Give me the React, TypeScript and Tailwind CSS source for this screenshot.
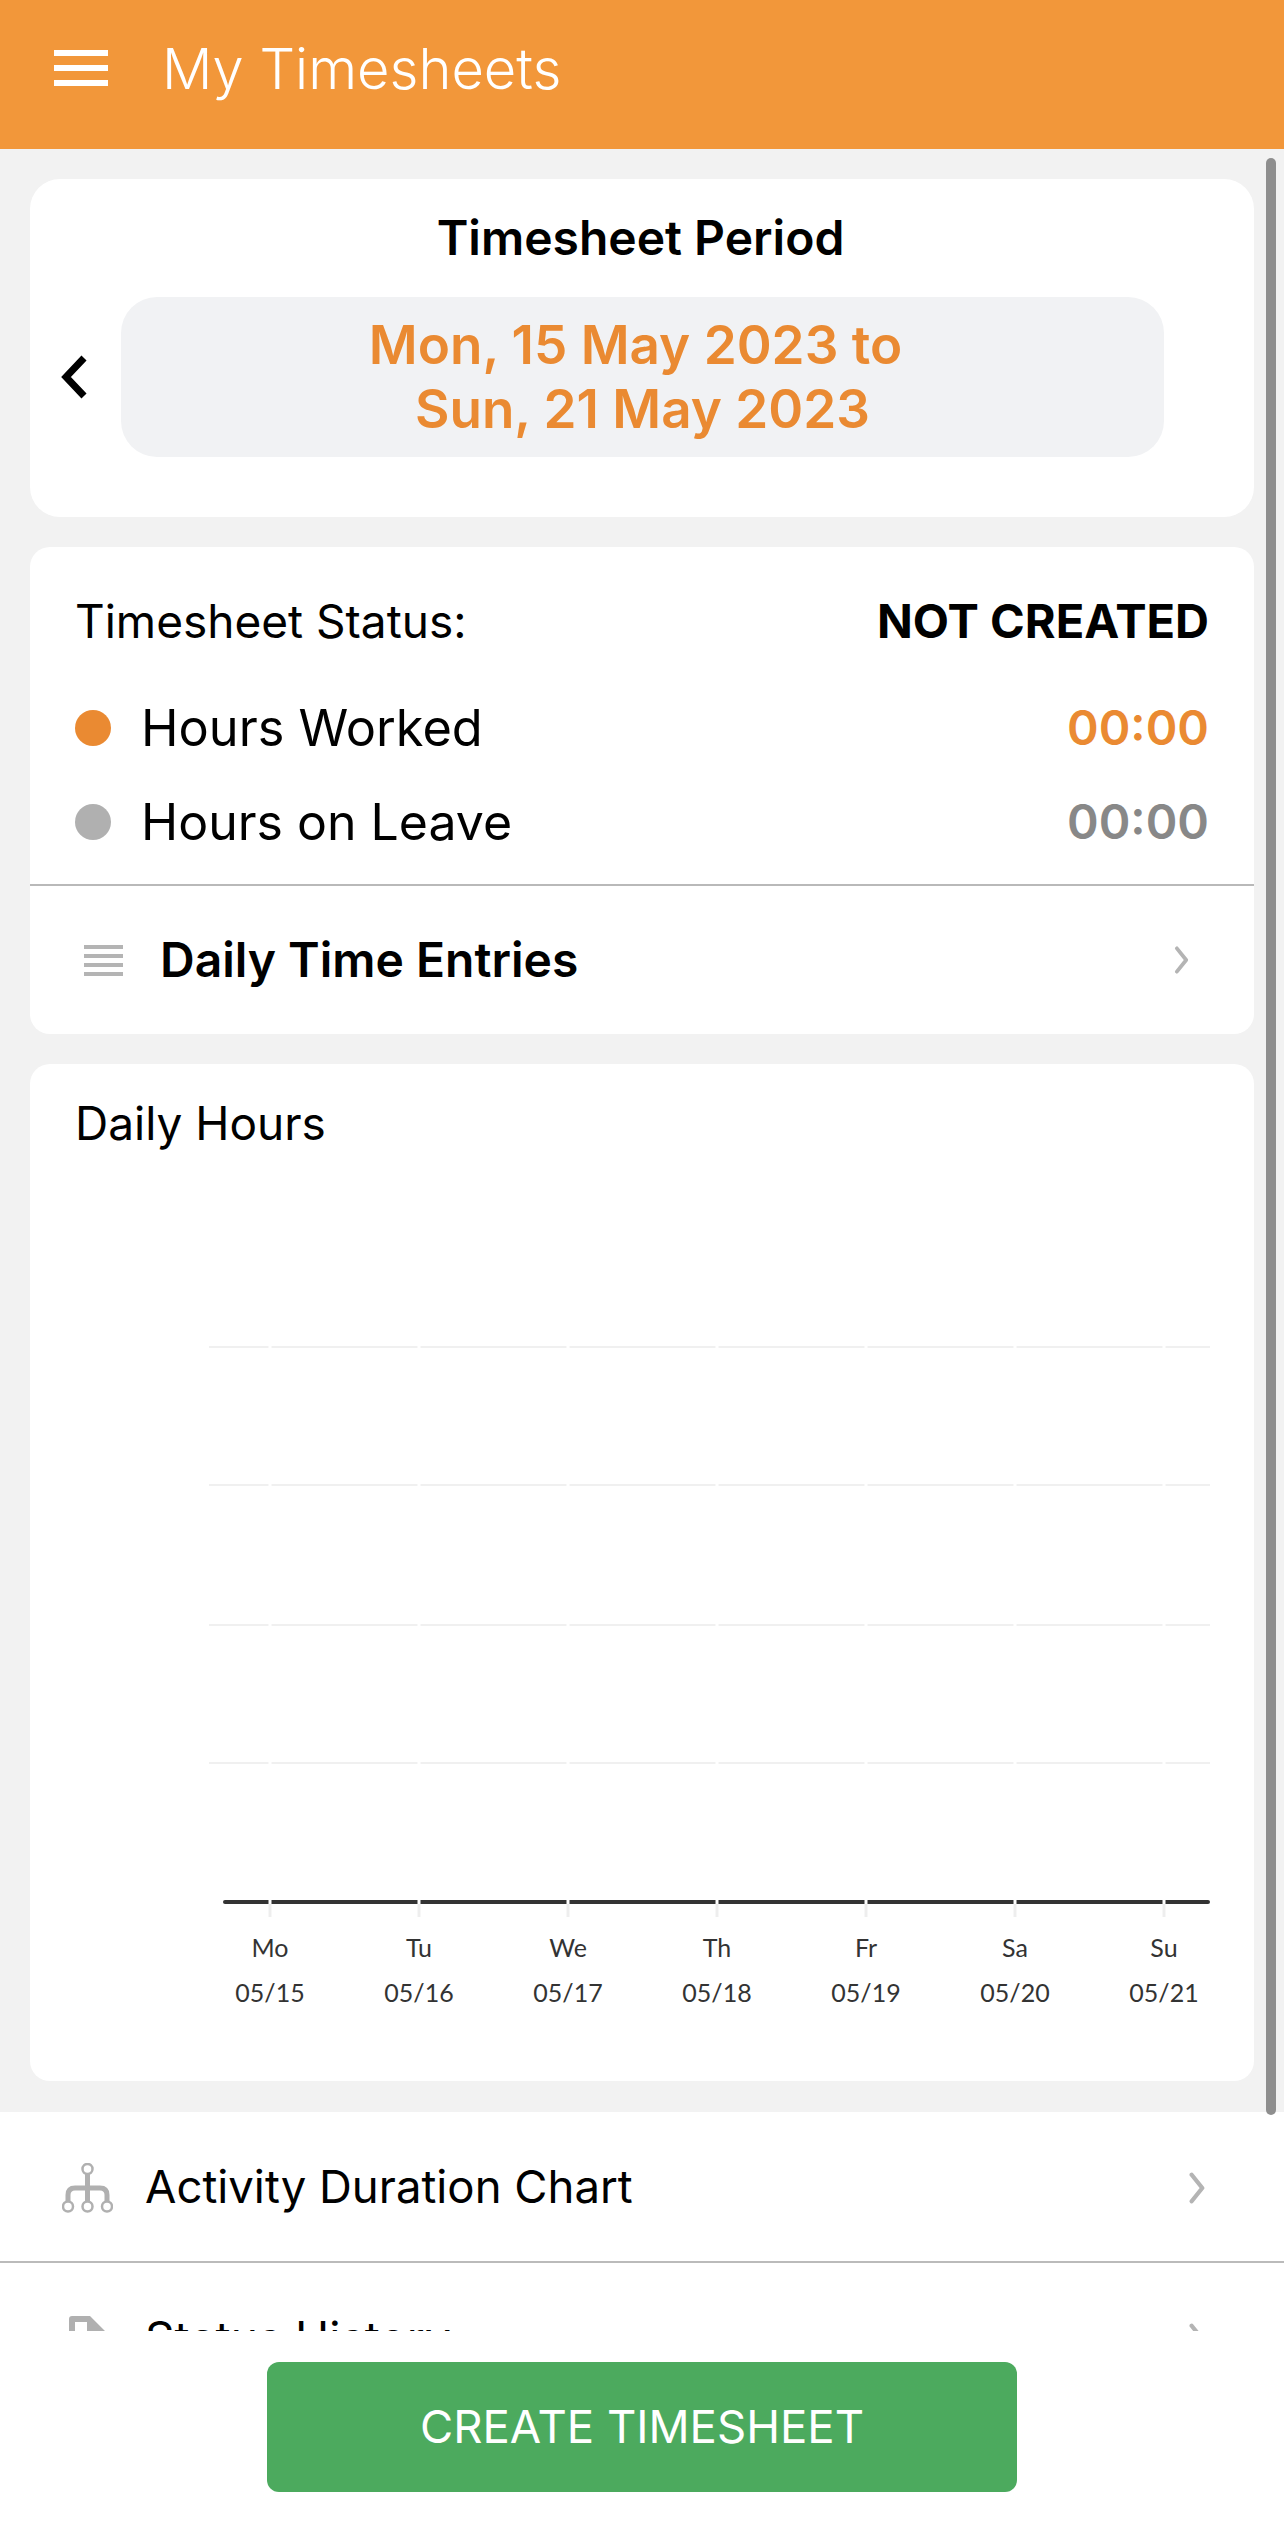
const days = [
  { day: 'Mo', date: '05/15' },
  { day: 'Tu', date: '05/16' },
  { day: 'We', date: '05/17' },
  { day: 'Th', date: '05/18' },
  { day: 'Fr', date: '05/19' },
  { day: 'Sa', date: '05/20' },
  { day: 'Su', date: '05/21' },
];

const tickX = days.map((_, i) => 240 + i * 149);

function Chevron({ className }: { className: string }) {
  return (
    <svg className={className} viewBox="0 0 16 30" fill="none" stroke="#b4b4b4" strokeWidth={4}>
      <path d="M2.5 2.5l10 12.5-10 12.5" strokeLinecap="round" strokeLinejoin="round" />
    </svg>
  );
}

// bar chart with no data: only the grid and the axis are drawn
function DailyChart() {
  return (
    <svg className="block w-full h-[760px]" viewBox="0 0 1224 760">
      {[67, 205, 345, 483].map((y) => (
        <line key={y} x1={179} x2={1180} y1={y} y2={y} stroke="#f0f0f0" strokeWidth={2} />
      ))}
      <line x1={195} x2={1178} y1={622} y2={622} stroke="#333333" strokeWidth={4} strokeLinecap="round" />
      {tickX.map((x) => (
        <g key={x}>
          <line x1={x} x2={x} y1={60} y2={624} stroke="#ffffff" strokeWidth={3} />
          <line x1={x} x2={x} y1={624} y2={637} stroke="#eeeeee" strokeWidth={3} />
        </g>
      ))}
      {days.map((d, i) => (
        <g key={d.day} fill="#333333" textAnchor="middle" fontSize={25} fontFamily="Lato, sans-serif">
          <text x={tickX[i]} y={677}>{d.day}</text>
          <text x={tickX[i]} y={722}>{d.date}</text>
        </g>
      ))}
    </svg>
  );
}

export default function App() {
  return (
    <div className="relative flex flex-col h-[2522px] w-[1284px] overflow-hidden bg-white text-black font-['Inter',sans-serif]">
      {/* Header */}
      <header className="flex items-center h-[149px] pl-[54px] flex-shrink-0 bg-[#f2973a] text-white">
        <div className="flex flex-col gap-[9px] w-[54px] mb-[13px]">
          <div className="h-[6px] bg-white" />
          <div className="h-[6px] bg-white" />
          <div className="h-[6px] bg-white" />
        </div>
        <h1 className="ml-[54px] mb-[12px] text-[56px] leading-none font-light">My Timesheets</h1>
      </header>

      {/* Scrolling content */}
      <main className="h-[2182px] flex-shrink-0 overflow-hidden">
        <div className="flex flex-col gap-[30px] px-[30px] pt-[30px] pb-[31px] bg-[#f2f2f2]">
          {/* Period */}
          <section className="h-[338px] bg-white rounded-[30px]">
            <h2 className="pt-[30px] pr-[3px] text-center text-[48px] leading-[58px] font-semibold">Timesheet Period</h2>
            <div className="flex items-center mt-[30px]">
              <div className="w-[91px] flex-shrink-0 pl-[30px]">
                <svg className="w-[28px] h-[44px]" viewBox="0 0 28 44" fill="none" stroke="#000000" strokeWidth={7}>
                  <path d="M24 3L6 22l18 19" />
                </svg>
              </div>
              <div className="w-[1043px] h-[160px] flex items-center justify-center rounded-[36px] bg-[#f1f2f4] text-center text-[#ea8a32] text-[53px] leading-[64px] font-semibold">
                <p>
                  <span className="inline-block pr-[14px]">Mon, 15 May 2023 to</span>
                  <br />
                  Sun, 21 May 2023
                </p>
              </div>
            </div>
          </section>

          {/* Status */}
          <section className="bg-white rounded-[20px]">
            <div className="h-[339px] px-[45px] pt-[14px] border-b-2 border-[#b9b9b9]">
              <div className="flex items-center justify-between h-[120px]">
                <span className="text-[46px]">Timesheet Status:</span>
                <span className="text-[47px] font-bold">NOT CREATED</span>
              </div>
              <div className="flex items-center h-[94px]">
                <span className="w-[36px] h-[36px] rounded-full bg-[#ea8a32]" />
                <span className="ml-[30px] text-[50.5px]">Hours Worked</span>
                <span className="ml-auto text-[#ea8a32] text-[48px] font-semibold">00:00</span>
              </div>
              <div className="flex items-center h-[94px]">
                <span className="w-[36px] h-[36px] rounded-full bg-[#b0b0b0]" />
                <span className="ml-[30px] text-[50px]">Hours on Leave</span>
                <span className="ml-auto text-[#888888] text-[48px] font-semibold">00:00</span>
              </div>
            </div>
            <div className="flex items-center h-[148px] pl-[54px] pr-[64px]">
              <div className="flex flex-col gap-[5px] w-[39px]">
                <div className="h-[4px] bg-[#b4b4b4]" />
                <div className="h-[4px] bg-[#b4b4b4]" />
                <div className="h-[4px] bg-[#b4b4b4]" />
                <div className="h-[4px] bg-[#b4b4b4]" />
              </div>
              <span className="ml-[37px] text-[48px] font-semibold">Daily Time Entries</span>
              <Chevron className="ml-auto w-[16px] h-[28px]" />
            </div>
          </section>

          {/* Daily hours */}
          <section className="h-[1017px] bg-white rounded-[20px]">
            <h2 className="pl-[45px] pt-[30px] h-[216px] text-[46px] leading-[58px]">Daily Hours</h2>
            <DailyChart />
          </section>
        </div>

        {/* Link rows */}
        <div className="flex items-center h-[151px] pl-[62px] pr-[78px] pt-[2px] border-b-2 border-[#bbbbbb]">
          <svg className="w-[51px] h-[50px] flex-shrink-0" viewBox="0 0 51 50" fill="none" stroke="#b0b0b0">
            <circle cx="25.5" cy="6" r="5" strokeWidth={2.5} />
            <circle cx="6" cy="43.5" r="5" strokeWidth={2.5} />
            <circle cx="25.5" cy="43.5" r="5" strokeWidth={2.5} />
            <circle cx="45" cy="43.5" r="5" strokeWidth={2.5} />
            <path d="M25.5 11v27M6 38v-6q0-7 7-7h25q7 0 7 7v6" strokeWidth={5} />
          </svg>
          <span className="ml-[32px] text-[45.5px]">Activity Duration Chart</span>
          <Chevron className="ml-auto w-[17px] h-[32px]" />
        </div>
        <div className="flex items-center h-[151px] pl-[69px] pr-[78px]">
          <svg className="w-[36px] h-[46px] flex-shrink-0" viewBox="0 0 36 46" fill="#b0b0b0">
            <path d="M3 0h18l15 15v28q0 3-3 3H3q-3 0-3-3V3q0-3 3-3zm3 6v34h24V18H18V6z" fillRule="evenodd" />
          </svg>
          <span className="ml-[40px] text-[46px]">Status History</span>
          <Chevron className="ml-auto w-[17px] h-[32px]" />
        </div>
      </main>

      {/* Footer action */}
      <div className="flex justify-center pt-[31px] flex-1 bg-white">
        <button className="w-[750px] h-[130px] rounded-[12px] bg-[#4caa5e] text-white text-[45.5px]">CREATE TIMESHEET</button>
      </div>

      {/* Scrollbar overlay */}
      <div className="absolute left-[1266px] top-[158px] w-[10px] h-[1957px] rounded-full bg-[#8e8e8e]" />
    </div>
  );
}
